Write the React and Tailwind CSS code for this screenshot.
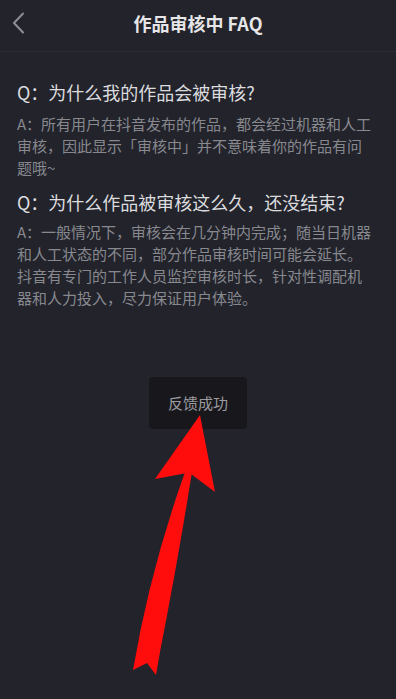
import React from "react";

const FAQS = [
  {
    q: "为什么我的作品会被审核?",
    a: "所有用户在抖音发布的作品，都会经过机器和人工审核，因此显示「审核中」并不意味着你的作品有问题哦~",
  },
  {
    q: "为什么作品被审核这么久，还没结束?",
    a: "一般情况下，审核会在几分钟内完成；随当日机器和人工状态的不同，部分作品审核时间可能会延长。抖音有专门的工作人员监控审核时长，针对性调配机器和人力投入，尽力保证用户体验。",
  },
];

export default function App() {
  return (
    <div
      className="relative w-[396px] h-[699px] overflow-hidden bg-[#22232b]"
      style={{ fontFamily: '"Noto Sans CJK SC", "Noto Sans", sans-serif' }}
    >
      <header className="relative h-[52px] flex items-center justify-center border-b border-[#2c2d36]">
        <button className="absolute left-[8px] top-[10px] w-[20px] h-[26px] flex items-center justify-center text-[#8d8e94]">
          <svg width="14" height="22" viewBox="0 0 14 22" fill="none">
            <path d="M12 1.5L3 11l9 9.5" stroke="currentColor" strokeWidth="2" strokeLinecap="round" strokeLinejoin="round" />
          </svg>
        </button>
        <h1 className="text-[18px] font-bold text-[#e6e6e8] leading-none -mt-[6px]">作品审核中 FAQ</h1>
      </header>

      <div className="px-[17px] pt-[27px] flex flex-col">
        {FAQS.map((item, i) => (
          <div key={i} className={i > 0 ? "mt-[10px]" : ""}>
            <h2 className="text-[18px] leading-[26px] text-[#dcdcdf]">{"Q：" + item.q}</h2>
            <p className={`${i > 0 ? "mt-[6px]" : "mt-[8px]"} text-[15px] leading-[22px] text-[#88898f] pr-[4px]`}>
              {"A：" + item.a}
            </p>
          </div>
        ))}
      </div>

      {/* toast */}
      <div className="absolute left-[149px] top-[377px] w-[98px] h-[52px] rounded-[4px] bg-[#18181c] flex items-center justify-center">
        <span className="text-[15px] text-[#9c9ca0]">反馈成功</span>
      </div>

      {/* red annotation arrow */}
      <svg className="absolute left-0 top-0" width="396" height="699" viewBox="0 0 396 699">
        <path d="M200 415 L155 479 L187 473 L191 474 L215 492 Z" fill="#ff0d0d" />
        <path
          d="M185 472 L192 472 Q178 560 160 652 L156 675 L147 663 L133 670 Q150 570 185 472 Z"
          fill="#ff0d0d"
        />
      </svg>
    </div>
  );
}
